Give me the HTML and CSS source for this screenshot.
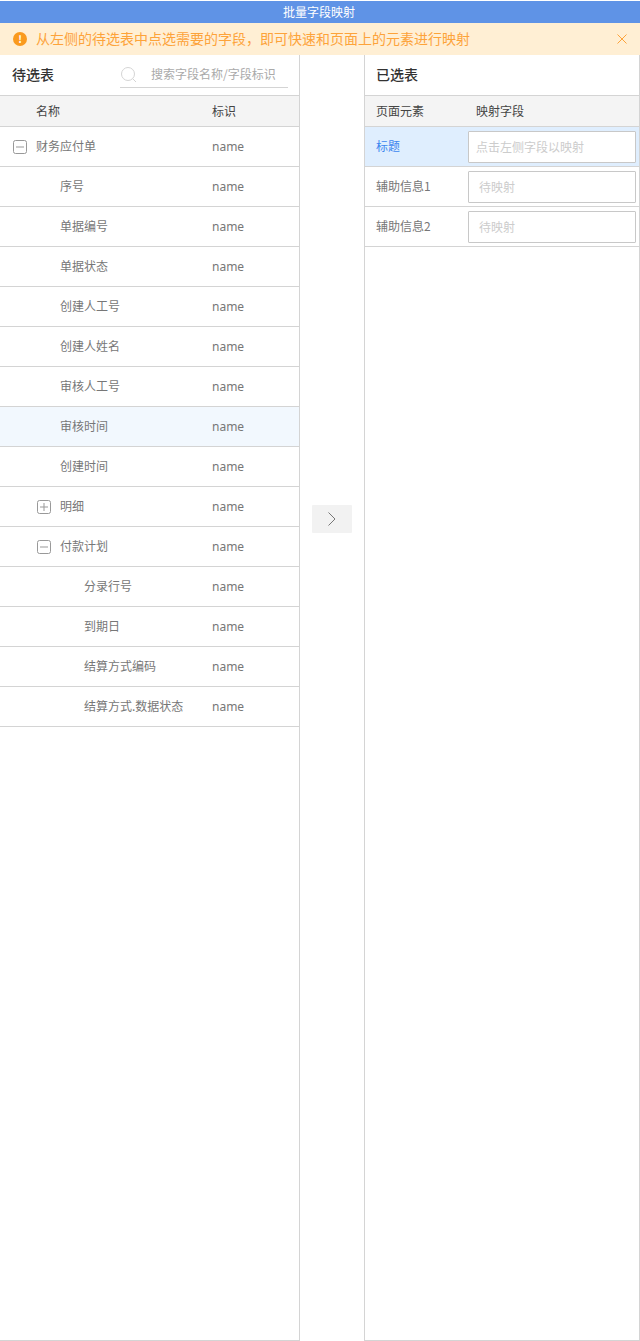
FILE: index.html
```html
<!DOCTYPE html>
<html lang="zh-CN">
<head>
    <meta charset="UTF-8">
    <meta name="viewport" content="width=device-width, initial-scale=1.0">
    <title>批量字段映射</title>
    <link rel="stylesheet" href="styles.css">
</head>
<body>
    <div class="title-bar">批量字段映射</div>

    <div class="alert">
        <span class="alert-icon">!</span>
        <span class="alert-text">从左侧的待选表中点选需要的字段，即可快速和页面上的元素进行映射</span>
        <svg class="alert-close" width="10" height="10" viewBox="0 0 10 10">
            <path d="M0.5 0.5L9.5 9.5M9.5 0.5L0.5 9.5" stroke="#fda33a" stroke-width="1" fill="none"/>
        </svg>
    </div>

    <div class="main">
        <div class="panel panel-left">
            <div class="panel-head">
                <div class="panel-title">待选表</div>
                <div class="search">
                    <svg class="search-icon" width="16" height="16" viewBox="0 0 16 16">
                        <circle cx="7" cy="7" r="6.5" stroke="#d4d4d4" fill="none"/>
                        <path d="M11.8 11.8L15 15" stroke="#d4d4d4" fill="none"/>
                    </svg>
                    <span class="search-text">搜索字段名称/字段标识</span>
                </div>
            </div>
            <div class="row row-head">
                <div class="cell-name level-0"><span class="toggle-space"></span>名称</div>
                <div class="cell-id">标识</div>
            </div>
            <div class="row">
                <div class="cell-name level-0">
                    <svg class="toggle" width="14" height="14" viewBox="0 0 14 14"><rect x="0.5" y="0.5" width="13" height="13" rx="2" stroke="#999" fill="none"/><path d="M3 7H11" stroke="#999"/></svg>财务应付单
                </div>
                <div class="cell-id">name</div>
            </div>
            <div class="row"><div class="cell-name level-1"><span class="toggle-space"></span>序号</div><div class="cell-id">name</div></div>
            <div class="row"><div class="cell-name level-1"><span class="toggle-space"></span>单据编号</div><div class="cell-id">name</div></div>
            <div class="row"><div class="cell-name level-1"><span class="toggle-space"></span>单据状态</div><div class="cell-id">name</div></div>
            <div class="row"><div class="cell-name level-1"><span class="toggle-space"></span>创建人工号</div><div class="cell-id">name</div></div>
            <div class="row"><div class="cell-name level-1"><span class="toggle-space"></span>创建人姓名</div><div class="cell-id">name</div></div>
            <div class="row"><div class="cell-name level-1"><span class="toggle-space"></span>审核人工号</div><div class="cell-id">name</div></div>
            <div class="row row-hover"><div class="cell-name level-1"><span class="toggle-space"></span>审核时间</div><div class="cell-id">name</div></div>
            <div class="row"><div class="cell-name level-1"><span class="toggle-space"></span>创建时间</div><div class="cell-id">name</div></div>
            <div class="row">
                <div class="cell-name level-1">
                    <svg class="toggle" width="14" height="14" viewBox="0 0 14 14"><rect x="0.5" y="0.5" width="13" height="13" rx="2" stroke="#999" fill="none"/><path d="M3 7H11M7 3V11" stroke="#999"/></svg>明细
                </div>
                <div class="cell-id">name</div>
            </div>
            <div class="row">
                <div class="cell-name level-1">
                    <svg class="toggle" width="14" height="14" viewBox="0 0 14 14"><rect x="0.5" y="0.5" width="13" height="13" rx="2" stroke="#999" fill="none"/><path d="M3 7H11" stroke="#999"/></svg>付款计划
                </div>
                <div class="cell-id">name</div>
            </div>
            <div class="row"><div class="cell-name level-2"><span class="toggle-space"></span>分录行号</div><div class="cell-id">name</div></div>
            <div class="row"><div class="cell-name level-2"><span class="toggle-space"></span>到期日</div><div class="cell-id">name</div></div>
            <div class="row"><div class="cell-name level-2"><span class="toggle-space"></span>结算方式编码</div><div class="cell-id">name</div></div>
            <div class="row"><div class="cell-name level-2"><span class="toggle-space"></span>结算方式.数据状态</div><div class="cell-id">name</div></div>
        </div>

        <div class="transfer">
            <div class="transfer-btn">
                <svg width="8" height="14" viewBox="0 0 8 14"><path d="M0.5 0.5L7 7L0.5 13.5" stroke="#777" fill="none"/></svg>
            </div>
        </div>

        <div class="panel panel-right">
            <div class="panel-head panel-head-right">
                <div class="panel-title">已选表</div>
            </div>
            <div class="row row-head">
                <div class="cell-element">页面元素</div>
                <div class="cell-field">映射字段</div>
            </div>
            <div class="row row-active">
                <div class="cell-element">标题</div>
                <div class="map-input first">点击左侧字段以映射</div>
            </div>
            <div class="row">
                <div class="cell-element">辅助信息1</div>
                <div class="map-input">待映射</div>
            </div>
            <div class="row">
                <div class="cell-element">辅助信息2</div>
                <div class="map-input">待映射</div>
            </div>
        </div>
    </div>
</body>
</html>
```

FILE: styles.css
```css
html, body {
    height: 100%;
}

body {
    margin: 0;
    padding-top: 1px;
    box-sizing: border-box;
    height: 1341px;
    display: flex;
    flex-direction: column;
    overflow: hidden;
    background-color: #fff;
    color: #777;
    font-family: "Noto Sans CJK SC", "Noto Sans", sans-serif;
    font-size: 12px;
}

.title-bar {
    height: 22px;
    line-height: 22px;
    flex-shrink: 0;
    padding-right: 2px;
    box-sizing: border-box;
    background-color: #5f93e6;
    color: #fff;
    text-align: center;
}

.alert {
    height: 32px;
    flex-shrink: 0;
    box-sizing: border-box;
    display: flex;
    align-items: center;
    padding: 0 13px;
    background-color: #ffefd4;
    color: #fda33a;
    font-size: 14px;
}

.alert-icon {
    width: 14px;
    height: 14px;
    line-height: 14px;
    border-radius: 50%;
    margin-right: 9px;
    background-color: #fa9a1e;
    color: #fff;
    font-size: 10px;
    font-weight: bold;
    text-align: center;
}

.alert-text {
    flex-grow: 1;
    margin-bottom: 2px;
}

.main {
    flex-grow: 1;
    display: flex;
    min-height: 0;
}

.panel {
    box-sizing: border-box;
    border-bottom: 1px solid #d4d4d4;
}

.panel-left {
    width: 300px;
    border-right: 1px solid #d4d4d4;
}

.panel-right {
    width: 276px;
    border-left: 1px solid #d4d4d4;
    border-right: 1px solid #d4d4d4;
}

.panel-head {
    height: 41px;
    box-sizing: border-box;
    display: flex;
    align-items: flex-start;
    justify-content: space-between;
    padding: 0 11px 0 12px;
    border-bottom: 1px solid #d4d4d4;
}

.panel-head-right {
    padding-left: 11px;
}

.panel-title {
    line-height: 38px;
    color: #333;
    font-size: 14px;
    font-weight: 500;
}

.search {
    width: 168px;
    height: 33px;
    box-sizing: border-box;
    display: flex;
    align-items: center;
    padding-top: 8px;
    border-bottom: 1px solid #d4d4d4;
}

.search-icon {
    flex-shrink: 0;
    margin-left: 1px;
    margin-right: 14px;
}

.search-text {
    margin-bottom: 4px;
    color: #aaa;
}

.row {
    height: 40px;
    box-sizing: border-box;
    display: flex;
    align-items: center;
    border-bottom: 1px solid #d4d4d4;
}

.row-head {
    height: 31px;
    padding-bottom: 2px;
    background-color: #f4f4f4;
    color: #444;
}

.row-hover {
    background-color: #f2f8fe;
}

.row-active {
    background-color: #dfeefe;
}

.row-active .cell-element {
    color: #3d86ef;
}

.cell-name {
    width: 212px;
    flex-shrink: 0;
    display: flex;
    align-items: center;
    padding-bottom: 2px;
}

.row-head .cell-name,
.row-head .cell-element {
    padding-bottom: 0;
}

.level-0 {
    padding-left: 13px;
    box-sizing: border-box;
}

.level-1 {
    padding-left: 37px;
    box-sizing: border-box;
}

.level-2 {
    padding-left: 61px;
    box-sizing: border-box;
}

.toggle {
    flex-shrink: 0;
    margin-top: 2px;
    margin-right: 9px;
}

.toggle-space {
    width: 23px;
    flex-shrink: 0;
}

.cell-id {
    font-family: "Noto Sans", sans-serif;
}

.row-head .cell-id {
    font-family: "Noto Sans CJK SC", sans-serif;
}

.cell-element {
    width: 103px;
    flex-shrink: 0;
    padding-left: 11px;
    padding-bottom: 2px;
    box-sizing: border-box;
}

.cell-field {
    padding-left: 8px;
}

.map-input {
    width: 168px;
    height: 32px;
    line-height: 30px;
    box-sizing: border-box;
    padding-left: 10px;
    background-color: #fff;
    border: 1px solid #c8c8c8;
    border-radius: 1px;
    color: #ccc;
}

.map-input.first {
    padding-left: 7px;
}

.transfer {
    width: 64px;
    flex-shrink: 0;
    display: flex;
    justify-content: center;
    padding-top: 450px;
}

.transfer-btn {
    width: 40px;
    height: 28px;
    display: flex;
    align-items: center;
    justify-content: center;
    border-radius: 1px;
    background-color: #f2f2f2;
}
```
